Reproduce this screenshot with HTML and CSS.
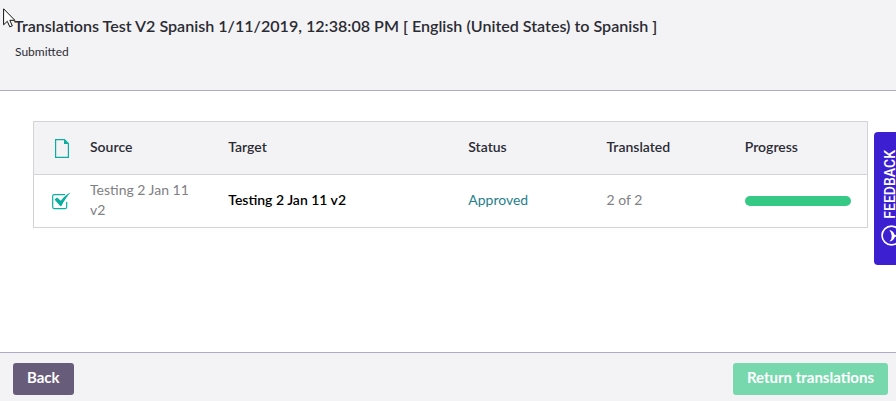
FILE: index.html
```
<!DOCTYPE html>
<html lang="en">
<head>
  <meta charset="UTF-8">
  <meta name="viewport" content="width=device-width, initial-scale=1.0">
  <title>Translations Test V2 Spanish</title>
  <link rel="stylesheet" href="styles.css">
</head>
<body>
  <header class="page-header">
    <h1>Translations Test V2 Spanish 1/11/2019, 12:38:08 PM [ English (United States) to Spanish ]</h1>
    <p class="state">Submitted</p>
  </header>
  <main>
    <table class="items">
      <colgroup>
        <col class="col-icon">
        <col>
        <col class="col-target">
        <col>
        <col>
        <col>
      </colgroup>
      <thead>
        <tr>
          <th class="icon">
            <svg width="14" height="19" viewBox="0 0 14 19">
              <path d="M.6.6h8.8l4 4v13.8H.6z" fill="none" stroke="#0aaea0" stroke-width="1.2"/>
              <path d="M9 .5v4.6h4.6z" fill="#0aaea0"/>
            </svg>
          </th>
          <th>Source</th>
          <th>Target</th>
          <th>Status</th>
          <th>Translated</th>
          <th>Progress</th>
        </tr>
      </thead>
      <tbody>
        <tr>
          <td class="icon">
            <svg width="19" height="18" viewBox="0 0 19 18">
              <path d="M13 2.6H2.2Q.7 2.6.7 4.1v11Q.7 16.6 2.2 16.6h11Q14.7 16.6 14.7 15.1V10" fill="none" stroke="#0aaea0" stroke-width="1.2"/>
              <path d="M2.5 7.6l2.5-2.2 3.8 3.4C11.5 5 14.5 2.4 18.6.4 14.8 4.5 12 8.8 9.4 14H8.2z" fill="#0aaea0"/>
            </svg>
          </td>
          <td>Testing 2 Jan 11 v2</td>
          <td class="target">Testing 2 Jan 11 v2</td>
          <td class="status">Approved</td>
          <td>2 of 2</td>
          <td><div class="progress"></div></td>
        </tr>
      </tbody>
    </table>
  </main>
  <footer>
    <button class="btn back">Back</button>
    <button class="btn return">Return translations</button>
  </footer>
  <div class="feedback">
    <svg width="21" height="21" viewBox="0 0 20 20">
      <circle cx="10" cy="10" r="9" fill="none" stroke="#fff" stroke-width="1.6"/>
      <path d="M8 4.8q3.5.5 5 4.5l3 .7-3 1.7q-.8 3.3-4.8 4 2.2-2.4 2-5.3-.3-3-2.2-5.6z" fill="#fff"/>
    </svg>
    <span>FEEDBACK</span>
  </div>
  <svg class="cursor" width="13" height="20" viewBox="0 0 13 20">
    <path d="M.6.8v16l3.7-3.5 2.5 5.6 2.5-1.1-2.5-5.5h5.1z" fill="#fff" stroke="#111" stroke-width="1"/>
  </svg>
</body>
</html>
```
FILE: styles.css
```
:root {
  --panel: #f3f3f6;
  --line: #aeabc3;
  --border: #d3d3d6;
  --text: #2b2b33;
  --muted: #808084;
  --success: #36c986;
}
* {
  box-sizing: border-box;
}
body {
  margin: 0;
  height: 401px;
  display: flex;
  flex-direction: column;
  overflow: hidden;
  background: #fff;
  color: var(--text);
  font-family: Lato, 'Liberation Sans', sans-serif;
  font-size: 14px;
}
.page-header {
  height: 91px;
  padding: 16px 14px 0;
  background: var(--panel);
  border-bottom: 1px solid var(--line);
}
h1 {
  margin: 0;
  font-size: 16.08px;
  line-height: 20px;
  font-weight: 600;
  white-space: nowrap;
}
.state {
  margin: 8px 0 0 1px;
  font-size: 12px;
  line-height: 16px;
}
main {
  flex: 1;
  padding: 30px 28px 0 33px;
}
.items {
  width: 835px;
  table-layout: fixed;
  border-collapse: separate;
  border-spacing: 0;
  border: 1px solid var(--border);
}
.col-icon { width: 40px; }
.col-target { width: 240px; }
th, td {
  height: 52px;
  padding: 0 16px 2px;
  text-align: left;
  vertical-align: middle;
  line-height: 20px;
}
th {
  height: 53px;
  background: var(--panel);
  border-bottom: 1px solid var(--border);
  font-weight: 600;
}
td {
  color: var(--muted);
}
.icon {
  padding: 0 0 0 18px;
}
th.icon {
  padding-left: 21px;
}
.icon svg {
  display: block;
}
.target {
  color: #000;
  font-weight: 600;
}
.status {
  color: #1f7f8c;
}
.progress {
  height: 10px;
  margin-top: 2px;
  border-radius: 5px;
  background: var(--success);
}
footer {
  height: 49px;
  padding: 10px 8px 0 13px;
  display: flex;
  justify-content: space-between;
  align-items: flex-start;
  background: var(--panel);
  border-top: 1px solid var(--line);
}
.btn {
  height: 32px;
  padding: 0 14px 4px;
  border: none;
  border-radius: 3px;
  color: #fff;
  font-family: inherit;
  font-size: 15px;
  font-weight: bold;
}
.back { background: #685c7b; }
.return { background: #77d7ad; }
/* sticks out past the right edge */
.feedback {
  position: absolute;
  top: 132px;
  right: -6px;
  width: 28.5px;
  height: 132.5px;
  padding: 18px 0 0 7px;
  display: flex;
  flex-direction: column-reverse;
  justify-content: flex-end;
  gap: 6px;
  border-radius: 4px;
  background: #3b1fd1;
  color: #fff;
  font-family: Roboto, sans-serif;
  font-size: 14px;
  font-weight: 500;
  line-height: 12px;
}
.feedback span {
  margin-left: 3px;
  writing-mode: vertical-rl;
  transform: rotate(180deg);
  align-self: flex-start;
}
.cursor {
  position: absolute;
  top: 8px;
  left: 3px;
}
```
